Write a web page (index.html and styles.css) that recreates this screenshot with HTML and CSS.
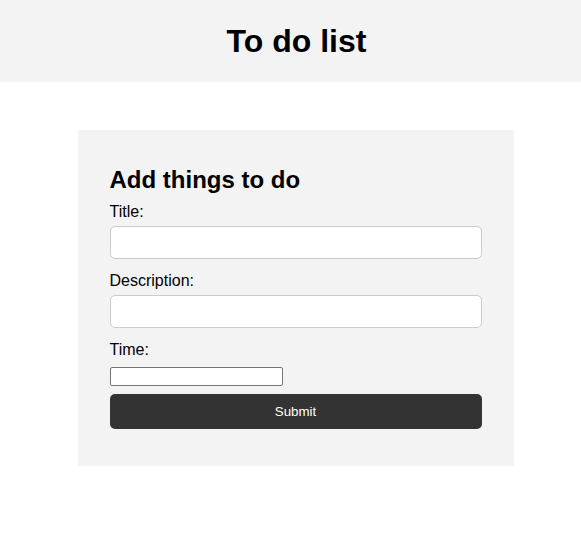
FILE: index.html
```html
<!DOCTYPE html>
<html lang="en">
<head>
<meta charset="utf-8">
<title>To do list</title>
<link rel="stylesheet" href="styles.css">
</head>
<body>
  <header class="site-header">
    <h1 class="site-title">To do list</h1>
  </header>
  <main class="main">
    <form class="card">
      <h2 class="card-title">Add things to do</h2>
      <label class="field-label" for="title">Title:</label>
      <input class="field-input" id="title" type="text">
      <label class="field-label" for="desc">Description:</label>
      <input class="field-input" id="desc" type="text">
      <label class="field-label" for="time">Time:</label>
      <input class="time-input" id="time" type="text">
      <button class="submit-btn" type="button">Submit</button>
    </form>
  </main>
</body>
</html>
```

FILE: styles.css
```css
* { box-sizing: border-box; }

html, body {
  margin: 0;
  padding: 0;
  background: #ffffff;
  font-family: "Liberation Sans", Arial, sans-serif;
  color: #000;
}

.site-header {
  background: #f3f3f3;
  height: 82px;
  padding: 23px 0 0 12px;
  text-align: center;
}

.site-title {
  margin: 0;
  font-size: 32px;
  font-weight: bold;
  line-height: 37px;
}

.main {
  display: flex;
  justify-content: center;
  padding-top: 48px;
}

.card {
  width: 436px;
  margin-left: 10px;
  background: #f3f3f3;
  padding: 36px 32px 37px;
  display: flex;
  flex-direction: column;
  align-items: flex-start;
}

.card-title {
  margin: 0 0 9px;
  font-size: 24px;
  font-weight: bold;
  line-height: 28px;
}

.field-label {
  display: block;
  font-size: 16px;
  line-height: 18px;
  margin-bottom: 5px;
}

.field-input {
  width: 100%;
  height: 33px;
  background: #fff;
  border: 1px solid #cccccc;
  border-radius: 5px;
  margin: 0 0 13px;
  padding: 0 8px;
  font: inherit;
}

.time-input {
  width: 173px;
  height: 19px;
  background: #fff;
  border: 1px solid #767676;
  border-radius: 2px;
  margin: 3px 0 8px;
  padding: 0 2px;
  font: 13.33px "Liberation Sans", Arial, sans-serif;
}

.submit-btn {
  width: 100%;
  height: 35px;
  background: #333333;
  color: #ffffff;
  border: none;
  border-radius: 5px;
  font: 13.33px "Liberation Sans", Arial, sans-serif;
  cursor: pointer;
}
```
